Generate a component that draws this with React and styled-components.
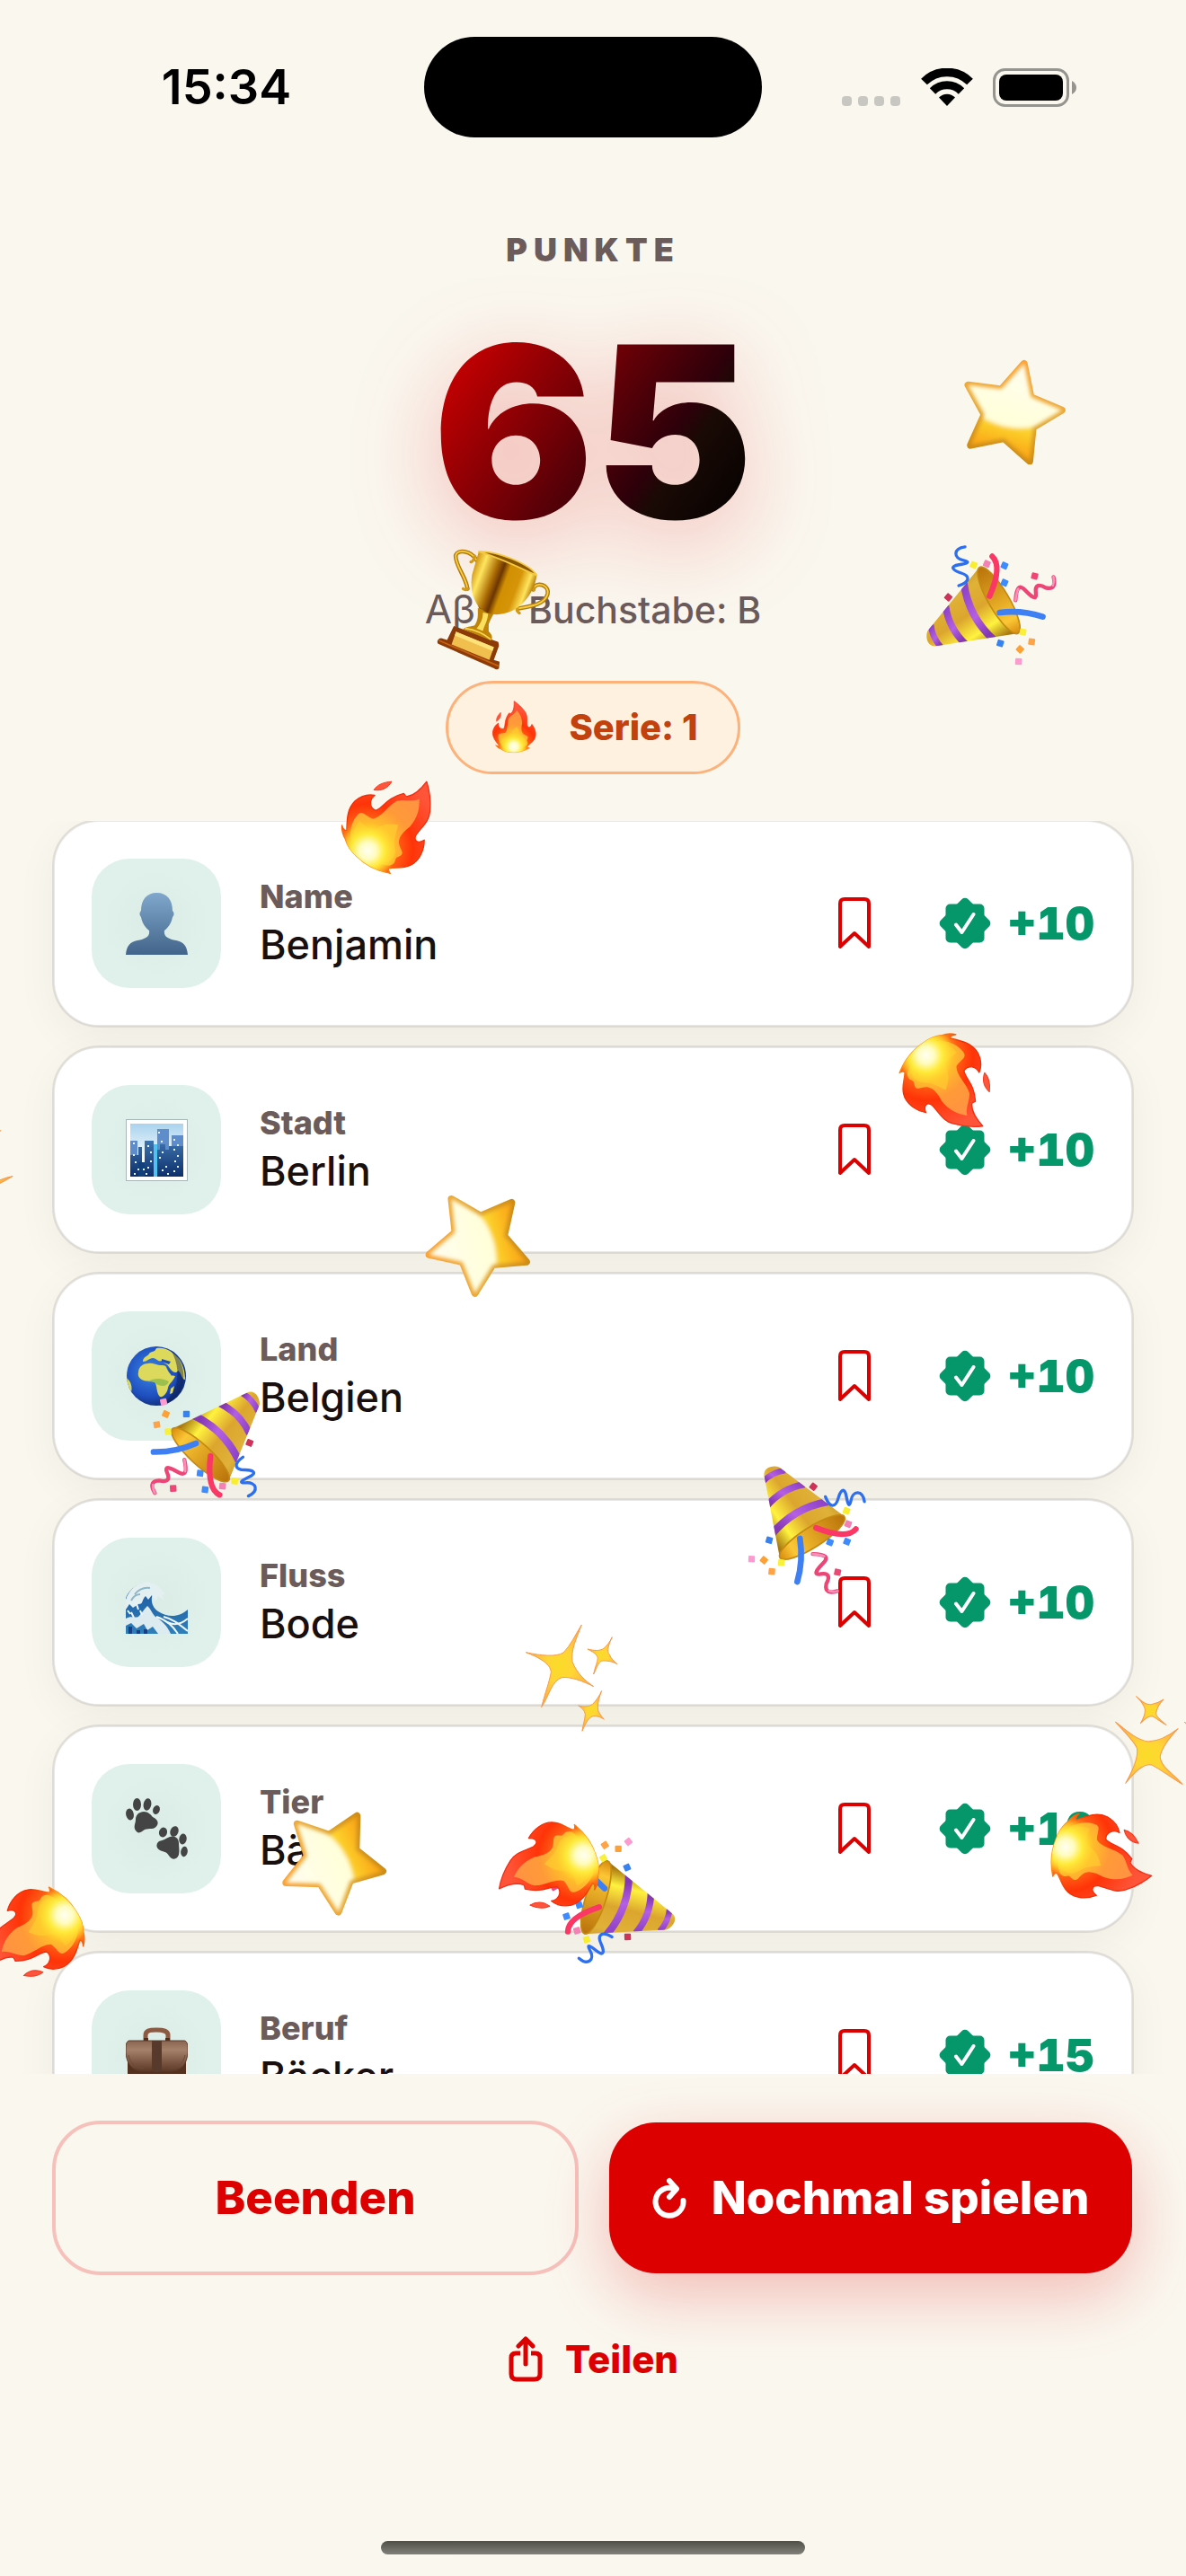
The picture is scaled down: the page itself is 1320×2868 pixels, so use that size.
import React from 'react'
import styled, { createGlobalStyle } from 'styled-components'

const results = [
  { label: 'Name', value: 'Benjamin', points: 10, icon: 'person' },
  { label: 'Stadt', value: 'Berlin', points: 10, icon: 'city' },
  { label: 'Land', value: 'Belgien', points: 10, icon: 'globe' },
  { label: 'Fluss', value: 'Bode', points: 10, icon: 'wave' },
  { label: 'Tier', value: 'Bär', points: 10, icon: 'paws' },
  { label: 'Beruf', value: 'Bäcker', points: 15, icon: 'briefcase' },
]

// x and y are the centre of each falling piece
const confetti = [
  { kind: 'star', x: 1125, y: 460, turn: 15 },
  { kind: 'popper', x: 1104, y: 673, turn: 0 },
  { kind: 'trophy', x: 550, y: 678, turn: 0 },
  { kind: 'flame', x: 437, y: 915, turn: 40 },
  { kind: 'flame', x: 1057, y: 1208, turn: 141 },
  { kind: 'sparkles', x: -34, y: 1326, turn: -135 },
  { kind: 'star', x: 533, y: 1383, turn: -104 },
  { kind: 'popper', x: 229, y: 1613, turn: 163 },
  { kind: 'popper', x: 899, y: 1704, turn: 88 },
  { kind: 'sparkles', x: 625, y: 1855, turn: 0 },
  { kind: 'sparkles', x: 1279, y: 1952, turn: -73 },
  { kind: 'star', x: 370, y: 2072, turn: -115 },
  { kind: 'popper', x: 672, y: 2115, turn: 228 },
  { kind: 'flame', x: 610, y: 2081, turn: -112 },
  { kind: 'flame', x: 1226, y: 2070, turn: 108 },
  { kind: 'flame', x: 37, y: 2156, turn: -125 },
]

const App = () => {
  return (
    <Screen>
      <GlobalStyle />
      <SharedGradients />
      <StatusBar>
        <Clock>15:34</Clock>
        <Island />
        <StatusIcons>
          <SignalDots />
          <Wifi />
          <Battery />
        </StatusIcons>
      </StatusBar>

      <Header>
        <ScoreLabel>PUNKTE</ScoreLabel>
        <Score>65</Score>
        <Letter>
          <LetterIcon>Aβγ</LetterIcon>
          <span>Buchstabe: B</span>
        </Letter>
        <Streak>
          <Flame width="50" height="64" />
          <span>Serie: 1</span>
        </Streak>
      </Header>

      <List>
        {results.map((result) => {
          const Icon = tileIcons[result.icon]
          return (
            <Card key={result.label}>
              <Tile><Icon /></Tile>
              <Texts>
                <Category>{result.label}</Category>
                <Answer>{result.value}</Answer>
              </Texts>
              <SaveButton aria-label={`${result.label} merken`}><Bookmark /></SaveButton>
              <Points>
                <Seal />
                <span>+{result.points}</span>
              </Points>
            </Card>
          )
        })}
      </List>

      <Footer>
        <Actions>
          <Secondary>Beenden</Secondary>
          <Primary>
            <Replay />
            <span>Nochmal spielen</span>
          </Primary>
        </Actions>
        <ShareButton>
          <Share />
          <span>Teilen</span>
        </ShareButton>
        <HomeIndicator />
      </Footer>

      <Sky aria-hidden="true">
        {confetti.map((piece, i) => {
          const Piece = pieces[piece.kind]
          return (
            <Falling key={i} $x={piece.x} $y={piece.y} $turn={piece.turn}>
              <Piece />
            </Falling>
          )
        })}
      </Sky>
    </Screen>
  )
}

export default App

const starPoints = '0,-57 17,-23 54,-18 28,9 34,46 0,29 -34,46 -28,9 -54,-18 -17,-23'

const flameOutline = 'M315 30C325 60 329 95 326 130C323 165 300 180 280 208C270 226 282 241 307 226C307 260 290 298 260 311C235 323 210 316 187 321C185 328 189 334 193 338C150 330 110 310 80 280C60 262 48 245 42 222C35 210 30 195 31 177C34 187 40 195 47 193C48 150 50 120 75 95C95 78 120 72 141 76C124 88 120 118 145 127C170 118 180 85 238 70C245 78 245 81 250 80C280 75 300 50 315 30Z'

const SharedGradients = () => (
  <HiddenSvg width="0" height="0" aria-hidden="true">
    <defs>
      <radialGradient id="flameBody" gradientUnits="userSpaceOnUse" cx="118" cy="255" r="250">
        <stop offset="0" stopColor="#ffd62e" />
        <stop offset="0.26" stopColor="#ffb01e" />
        <stop offset="0.42" stopColor="#ff5a14" />
        <stop offset="0.6" stopColor="#ff3408" />
        <stop offset="1" stopColor="#ff5438" />
      </radialGradient>
      <linearGradient id="flameEdge" gradientUnits="userSpaceOnUse" x1="280" y1="40" x2="80" y2="300">
        <stop offset="0" stopColor="#f0301a" />
        <stop offset="0.7" stopColor="#ee3000" />
        <stop offset="1" stopColor="#ffae1e" />
      </linearGradient>
      <radialGradient id="flameTongue" gradientUnits="userSpaceOnUse" cx="118" cy="255" r="240">
        <stop offset="0" stopColor="#ffe832" />
        <stop offset="0.3" stopColor="#ffc428" />
        <stop offset="0.6" stopColor="#ff9a38" />
        <stop offset="1" stopColor="#ff9244" />
      </radialGradient>
      <radialGradient id="flameGlow" gradientUnits="userSpaceOnUse" cx="118" cy="262" r="95">
        <stop offset="0" stopColor="#fffff2" />
        <stop offset="0.3" stopColor="#fffcc0" />
        <stop offset="0.6" stopColor="#ffee3c" stopOpacity="0.9" />
        <stop offset="1" stopColor="#ffd92e" stopOpacity="0" />
      </radialGradient>
      <linearGradient id="starEdge" x1="0" y1="0" x2="0" y2="1">
        <stop offset="0" stopColor="#fba030" />
        <stop offset="0.5" stopColor="#e6a836" />
        <stop offset="1" stopColor="#cc8c18" />
      </linearGradient>
      <linearGradient id="starBody" x1="0" y1="0" x2="0" y2="1">
        <stop offset="0.35" stopColor="#fff08a" />
        <stop offset="0.68" stopColor="#fcd62e" />
        <stop offset="1" stopColor="#fba013" />
      </linearGradient>
      <linearGradient id="starGloss" x1="0" y1="0" x2="0" y2="1">
        <stop offset="0" stopColor="#fffdf0" />
        <stop offset="0.7" stopColor="#ffffd8" />
        <stop offset="1" stopColor="#fff08e" />
      </linearGradient>
      <radialGradient id="spark">
        <stop offset="0" stopColor="#fadb28" />
        <stop offset="0.4" stopColor="#ffd634" />
        <stop offset="1" stopColor="#ffab48" />
      </radialGradient>
      <linearGradient id="cone" x1="0" y1="0.1" x2="0.7" y2="1">
        <stop offset="0.1" stopColor="#b98a1c" />
        <stop offset="0.35" stopColor="#e0b138" />
        <stop offset="0.6" stopColor="#dca62e" />
        <stop offset="0.82" stopColor="#fff23e" />
        <stop offset="1" stopColor="#a8780f" />
      </linearGradient>
      <linearGradient id="coneInside" x1="0" y1="0" x2="1" y2="0">
        <stop offset="0" stopColor="#b9720b" />
        <stop offset="0.4" stopColor="#d99a1d" />
        <stop offset="0.8" stopColor="#fbc736" />
        <stop offset="1" stopColor="#d98a0e" />
      </linearGradient>
      <linearGradient id="stripe" x1="0" y1="0" x2="0.6" y2="1">
        <stop offset="0" stopColor="#8a3fc4" />
        <stop offset="0.6" stopColor="#b45fe4" />
        <stop offset="1" stopColor="#8438b4" />
      </linearGradient>
      <linearGradient id="cup" gradientUnits="userSpaceOnUse" x1="400" y1="830" x2="590" y2="900">
        <stop offset="0" stopColor="#c98a0a" />
        <stop offset="0.16" stopColor="#ffe55e" />
        <stop offset="0.36" stopColor="#a96a02" />
        <stop offset="0.46" stopColor="#6a3500" />
        <stop offset="0.56" stopColor="#d18f02" />
        <stop offset="0.75" stopColor="#d69408" />
        <stop offset="0.9" stopColor="#ffe45c" />
        <stop offset="1" stopColor="#b57a08" />
      </linearGradient>
      <linearGradient id="bust" x1="0" y1="0" x2="0" y2="1">
        <stop offset="0" stopColor="#80a8cc" />
        <stop offset="1" stopColor="#43648a" />
      </linearGradient>
      <linearGradient id="dusk" x1="0" y1="0" x2="0" y2="1">
        <stop offset="0" stopColor="#a9d3ee" />
        <stop offset="0.6" stopColor="#f2f8fb" />
      </linearGradient>
      <linearGradient id="tower" x1="0" y1="0" x2="0" y2="1">
        <stop offset="0" stopColor="#3f73ae" />
        <stop offset="1" stopColor="#0c2f6a" />
      </linearGradient>
      <radialGradient id="sea" cx="0.4" cy="0.42" r="0.6">
        <stop offset="0" stopColor="#3b86e4" />
        <stop offset="0.7" stopColor="#1f4fc0" />
        <stop offset="1" stopColor="#12307e" />
      </radialGradient>
      <linearGradient id="swell" x1="0" y1="0" x2="0" y2="1">
        <stop offset="0" stopColor="#1c56a2" />
        <stop offset="1" stopColor="#2f7fb8" />
      </linearGradient>
      <linearGradient id="leather" x1="0" y1="0" x2="0" y2="1">
        <stop offset="0" stopColor="#8a6550" />
        <stop offset="0.3" stopColor="#a5806a" />
        <stop offset="1" stopColor="#5c3826" />
      </linearGradient>
      <filter id="soften" x="-20%" y="-20%" width="140%" height="140%">
        <feGaussianBlur stdDeviation="2" />
      </filter>
      <clipPath id="flameClip">
        <path d={flameOutline} />
      </clipPath>
      <clipPath id="coneClip">
        <path d="M388 815L215 1028C206 1048 214 1084 244 1079L516 1037Z" />
      </clipPath>
      <clipPath id="glossClip">
        <circle cx="-6" cy="-60" r="76" />
      </clipPath>
      <clipPath id="globeClip">
        <circle cx="34" cy="34" r="33" />
      </clipPath>
    </defs>
  </HiddenSvg>
)

/* falling pieces */

const Flame = (props) => (
  <svg width="100" height="128" viewBox="-70 -90 140 180" {...props}>
    <g transform="scale(0.467) rotate(-40) translate(-201 -165)" strokeLinejoin="round">
      <path d={flameOutline} fill="url(#flameBody)" stroke="url(#flameEdge)" strokeWidth="4" />
      <path d="M290 88C292 120 285 150 260 180C235 200 222 215 222 235C225 262 250 272 214 285C205 295 215 305 190 312C130 305 78 272 60 222C58 190 65 160 85 140C100 125 110 145 135 155C165 150 185 110 215 95C240 88 265 100 290 88Z" fill="url(#flameTongue)" />
      <path d="M220 175C215 200 203 220 209 250C214 278 200 290 185 300C130 300 85 270 68 232C66 210 72 180 90 163C110 176 120 200 150 185C175 170 195 172 220 175Z" fill="#ffd030" opacity="0.6" />
      <g clipPath="url(#flameClip)">
        <circle cx="118" cy="262" r="95" fill="url(#flameGlow)" />
      </g>
      <path d="M198 30C170 32 150 40 138 58C165 62 185 52 198 30Z" fill="#ff553c" stroke="#f23a20" strokeWidth="3" />
    </g>
  </svg>
)

const Star = () => (
  <svg width="132" height="132" viewBox="-66 -66 132 132">
    <polygon points={starPoints} fill="url(#starEdge)" stroke="url(#starEdge)" strokeWidth="8" strokeLinejoin="round" />
    <g filter="url(#soften)">
      <polygon points={starPoints} fill="url(#starBody)" />
      <g clipPath="url(#glossClip)">
        <polygon points={starPoints} fill="url(#starGloss)" />
      </g>
    </g>
  </svg>
)

const Sparkles = () => (
  <svg width="180" height="180" viewBox="-90 -90 180 180">
    <g transform="scale(0.333) translate(-129 -165)" fill="url(#spark)" stroke="#f59a4a" strokeWidth="3" strokeLinejoin="round">
      <path d="M196 27C178 75 160 110 165 150C180 190 210 215 236 233C200 215 160 200 130 203C95 215 90 260 62 302C75 250 88 220 94 185C92 155 50 135 10 119C60 130 110 135 135 120C160 95 175 60 196 27Z" />
      <path d="M298 68C285 95 280 115 288 125C295 140 305 150 315 158C300 150 280 145 262 148C250 155 245 175 236 192C240 170 250 150 250 138C248 125 230 115 216 108C240 114 258 114 270 106C280 98 290 85 298 68Z" />
      <path d="M263 248C252 275 248 300 252 315C258 328 265 335 271 343C260 335 245 330 232 333C215 340 208 362 198 382C202 355 208 340 208 325C206 312 195 303 185 297C205 302 222 300 232 293C245 280 255 265 263 248Z" />
    </g>
  </svg>
)

const papers = [
  [369, 808, '#f9ee2e', 24],
  [413, 804, '#f381b4', 24],
  [472, 810, '#3d8bff', 24],
  [472, 867, '#3d8bff', 24],
  [573, 845, '#ee4675', 14],
  [284, 916, '#cf3358', 40],
  [534, 1032, '#f9f03c', 10],
  [563, 1065, '#ffa346', 8],
  [524, 1090, '#ffa035', 42],
  [519, 1131, '#fb9bd0', 4],
  [458, 1070, '#3882f0', 18],
]

const Popper = () => (
  <svg width="153" height="140" viewBox="200 730 460 420">
    <path d="M388 815L215 1028C206 1048 214 1084 244 1079L516 1037Z" fill="url(#cone)" />
    <g clipPath="url(#coneClip)" fill="none" stroke="url(#stripe)">
      <path d="M336 868Q352 985 440 1062" strokeWidth="25" />
      <path d="M275 945Q286 1022 344 1075" strokeWidth="23" />
      <path d="M226 1008Q230 1052 262 1086" strokeWidth="20" />
    </g>
    <ellipse cx="453" cy="926" rx="128" ry="34" transform="rotate(59.6 453 926)" fill="url(#coneInside)" stroke="#c48a12" strokeWidth="5" />
    <g fill="none" strokeLinecap="round">
      <path d="M431 779Q466 812 422 912" stroke="#fb3766" strokeWidth="19" />
      <path d="M456 967Q530 958 600 981" stroke="#3f7ff4" strokeWidth="20" />
      <path d="M340 747C300 752 300 785 335 792C364 799 340 804 320 807C286 812 300 826 325 834C358 844 358 864 319 877" stroke="#2c6ff0" strokeWidth="10" />
      <path d="M509 926C512 882 522 872 541 892C560 912 580 930 577 902C573 872 590 872 610 884C640 892 642 870 636 848" stroke="#ee4577" strokeWidth="13" />
      <path d="M509 926C512 905 514 895 518 888M636 848Q640 862 634 876" stroke="#f990b8" strokeWidth="8" />
    </g>
    {papers.map(([x, y, color, turn]) => (
      <rect key={`${x}-${y}`} x={x - 11} y={y - 11} width="22" height="22" rx="3" fill={color} transform={`rotate(${turn} ${x} ${y})`} />
    ))}
  </svg>
)

const Trophy = () => (
  <svg width="132" height="139" viewBox="290 750 370 390">
    <g fill="none" strokeLinecap="round">
      <path d="M420 792C402 762 362 758 355 777C352 808 386 842 392 882" stroke="#b67a08" strokeWidth="13" />
      <path d="M420 792C402 762 362 758 355 777C352 808 386 842 392 882" stroke="#f5cf45" strokeWidth="5" />
      <path d="M415 780Q408 800 402 798M392 882Q386 888 378 882" stroke="#d39a14" strokeWidth="9" />
      <path d="M596 884C606 856 648 870 642 898C634 930 592 936 548 944" stroke="#b67a08" strokeWidth="13" />
      <path d="M596 884C606 856 648 870 642 898C634 930 592 936 548 944" stroke="#f5cf45" strokeWidth="5" />
      <path d="M598 870Q594 882 600 886M548 944Q542 950 554 958" stroke="#d39a14" strokeWidth="9" />
    </g>
    <path d="M349 998L488 1048L490 1060L474 1104L492 1110L490 1130C486 1136 480 1134 474 1130L300 1054C294 1046 300 1036 310 1036L328 1042Z" fill="#8c3a08" />
    <path d="M304 1044L486 1122" stroke="#c4600f" strokeWidth="5" strokeLinecap="round" />
    <path d="M356 1016L474 1064L460 1104L342 1056Z" fill="#f0bf4e" />
    <path d="M356 1016L474 1064L470 1076L352 1028Z" fill="#fce27a" />
    <path d="M378 1008C386 1000 404 1000 414 996C426 980 424 962 424 942L474 958C464 978 452 996 456 1014C466 1022 472 1032 466 1044Z" fill="#c08408" />
    <path d="M440 956C440 976 432 992 420 1006L440 1014C444 996 456 980 456 960Z" fill="#fbe060" />
    <path d="M384 1006Q430 1012 464 1040" stroke="#f8d650" strokeWidth="5" fill="none" />
    <path d="M427 766C480 762 586 804 608 840C600 900 548 968 472 962C420 954 396 900 406 838Z" fill="url(#cup)" />
    <path d="M427 766C480 762 586 804 608 840C566 822 490 784 427 766Z" fill="#8a5604" stroke="#f3c842" strokeWidth="5" strokeLinejoin="round" />
  </svg>
)

const pieces = { flame: Flame, star: Star, sparkles: Sparkles, popper: Popper, trophy: Trophy }

/* category icons */

const Person = () => (
  <svg width="69" height="69" viewBox="0 0 69 69">
    <path d="M0 69C1 58 5 55 13 53C22 51 27 49 26 42C20 37 18 32 17 27C15 25 15 22 17 20C17 8 23 0 34.500 0C46 0 52 8 52 20C54 22 54 25 52 27C51 32 49 37 43 42C42 49 47 51 56 53C64 55 68 58 69 69Z" fill="url(#bust)" />
  </svg>
)

const cityWindows = [[8, 26], [8, 39], [10, 47], [13, 55], [9, 60], [24, 29], [27, 36], [24, 53], [27, 46], [19, 55], [22, 60], [36, 14], [39, 24], [37, 42], [40, 36], [44, 52], [40, 56], [46, 60], [53, 22], [57, 28], [53, 33], [57, 40], [54, 46], [57, 52], [53, 57]]

const City = () => (
  <svg width="69" height="69" viewBox="0 0 69 69">
    <rect x="0.500" y="0.500" width="68" height="68" fill="#fff" stroke="#a9b7b6" />
    <rect x="5" y="5" width="59" height="59" fill="url(#dusk)" />
    <path d="M5 24H13V64H5ZM35 11H48V64H35ZM51 18H64V64H51Z" fill="#5f8dcb" />
    <path d="M5 40H14V31H18V50H21V24H31V64H5ZM34 34H38V28H44V34H49V64H34ZM48 30H64V64H48Z" fill="url(#tower)" />
    <path d="M31 28H35V64H31Z" fill="#4ec3ef" />
    <path d="M14 48H21V64H14Z" fill="#12407c" />
    {cityWindows.map(([x, y]) => <rect key={`${x}-${y}`} x={x} y={y} width="2" height="2" fill="#e4f3ff" />)}
  </svg>
)

const Globe = () => (
  <svg width="69" height="69" viewBox="0 0 69 69">
    <circle cx="34" cy="34" r="33" fill="url(#sea)" />
    <g clipPath="url(#globeClip)" fill="#dcd95c">
      <path d="M14 30C14 24 19 20 25 20C30 19 34 22 38 22C42 22 44 22 45 24C47 29 50 34 55 34C53 40 48 42 47 47C46 53 42 58 38 57C34 53 35 47 33 42C31 39 26 41 20 39C15 37 13 34 14 30Z" />
      <path d="M19 17C20 12 25 12 26 9C29 6 32 8 34 3C44 1 54 8 60 16C64 22 66 30 66 38C62 38 62 30 58 28C56 32 52 30 48 24C46 20 42 20 40 17C36 19 34 14 30 14C26 14 24 18 19 18Z" />
      <path d="M0 36C4 38 8 44 6 52L2 56ZM50 48L54 45L52 53L49 54Z" />
      <path d="M24 40C32 36 40 36 48 40C46 46 40 46 34 43C32 39 28 41 24 40Z" fill="#9cc04e" />
    </g>
    <path d="M40 15L50 18L48 21L40 18ZM46 24L53 32L51 34Z" fill="#1f4fb4" />
    <path d="M50 5C62 14 68 30 62 48C58 58 48 66 36 67C58 58 64 28 50 5Z" fill="#0a1c50" opacity="0.45" />
  </svg>
)

const Wave = () => (
  <svg width="69" height="69" viewBox="0 0 69 69">
    <path d="M0 29C5 18 14 12 26 12C31 13 34 16 33 20C27 26 27 38 36 44C48 52 60 50 69 42V69H0Z" fill="url(#swell)" />
    <path d="M0 31C2 24 8 16 16 13C24 10 34 12 38 18L44 24L40 26L43 32L36 27L33 33L29 26L25 31L22 27C17 32 20 36 14 36L8 40L4 36L0 42Z" fill="#e3eff0" />
    <path d="M0 52C6 48 10 52 14 50C18 46 20 42 24 38C27 40 29 46 33 50C40 54 46 60 50 69H36L30 61L24 65L20 58L12 63L6 57L0 60Z" fill="#dcebf0" />
    <g fill="none" stroke="#eef7fb" strokeWidth="2">
      <path d="M34 50C46 54 52 60 58 69" />
      <path d="M42 50C54 53 60 59 69 66" />
      <path d="M46 56C54 60 62 58 69 52" />
      <path d="M6 45L9 51M16 43L18 48M12 36L14 42M2 43L5 47" />
    </g>
    <path d="M10 25C14 20 20 17 27 18M6 32C8 28 12 25 16 25" fill="none" stroke="#8db6c8" strokeWidth="2" />
    <path d="M5 61V69M14 65V69M22 64V69" stroke="#173f86" strokeWidth="4" />
  </svg>
)

const Paws = () => (
  <svg width="69" height="69" viewBox="0 0 69 69">
    <g fill="#444">
      <ellipse cx="4.500" cy="18" rx="4.300" ry="6.500" transform="rotate(-12 4.500 18)" />
      <ellipse cx="12.500" cy="7" rx="4.500" ry="7" />
      <ellipse cx="24" cy="7" rx="4.300" ry="6.800" transform="rotate(10 24 7)" />
      <ellipse cx="34" cy="13" rx="3.800" ry="5" transform="rotate(20 34 13)" />
      <path d="M16 16C22 13 27 17 30 21C34 23 37 26 35 30C32 36 26 33 21 35C18 37 14 41 11 36C8 32 11 28 11 24C11 20 13 17 16 16Z" />
      <ellipse cx="41.500" cy="38" rx="4.500" ry="5.500" transform="rotate(15 41.500 38)" />
      <ellipse cx="54" cy="37" rx="4.500" ry="6" transform="rotate(20 54 37)" />
      <ellipse cx="63.500" cy="45.500" rx="4.200" ry="6" transform="rotate(8 63.500 45.500)" />
      <ellipse cx="65" cy="59.500" rx="3.800" ry="5.700" transform="rotate(8 65 59.500)" />
      <path d="M49 43C54 41 59 44 59 50C59 55 60 58 59 63C57 69 51 69 48 64C46 60 43 60 38 58C34 56 33 51 37 48C42 47 44 45 49 43Z" />
    </g>
  </svg>
)

const Briefcase = () => (
  <svg width="69" height="69" viewBox="0 0 69 69">
    <path d="M22 18V12C22 7 26 6 34 6C42 6 47 7 47 12V18" fill="none" stroke="#8b5a43" strokeWidth="5" />
    <path d="M20 17H25M44 17H49" stroke="#4d2d1e" strokeWidth="4" />
    <path d="M2 34H67V66H2Z" fill="#54301f" />
    <path d="M4 18H65C68 18 69 22 69 28C69 46 60 52 50 52H19C9 52 0 46 0 28C0 22 1 18 4 18Z" fill="url(#leather)" stroke="#5a3a2a" />
    <path d="M3 34C5 44 12 49 20 49M66 34C64 44 57 49 49 49" fill="none" stroke="#6e4a38" />
    <path d="M29 18H40V50C40 54 29 54 29 50Z" fill="#573a2b" />
    <rect x="27" y="62" width="15" height="4" fill="#e9e4df" />
  </svg>
)

const tileIcons = { person: Person, city: City, globe: Globe, wave: Wave, paws: Paws, briefcase: Briefcase }

/* interface icons */

const SignalDots = () => (
  <svg width="66" height="43" viewBox="0 0 66 43" fill="#c9c7c1">
    {[0, 18, 36, 54].map((x) => <rect key={x} x={x} y="31" width="11" height="11" rx="4" />)}
  </svg>
)

const Wifi = () => (
  <svg width="58" height="43" viewBox="0 0 58 43">
    <g fill="none" stroke="#000">
      <path d="M3.500 15A36 36 0 0 1 54.500 15" strokeWidth="9.500" />
      <path d="M13 25.500A22.500 22.500 0 0 1 45 25.500" strokeWidth="9" />
    </g>
    <path d="M20 32.500A12.500 12.500 0 0 1 38 32.500L29 42Z" />
  </svg>
)

const Battery = () => (
  <svg width="94" height="43" viewBox="0 0 94 43">
    <rect x="1.500" y="1.500" width="82" height="40" rx="12" fill="none" stroke="#96948f" strokeWidth="3" />
    <rect x="7" y="7" width="71" height="29" rx="8" />
    <path d="M88 14Q93 17 93 21.500T88 29Z" fill="#96948f" />
  </svg>
)

const Bookmark = () => (
  <svg width="36" height="58" viewBox="0 0 36 58" fill="none" stroke="#dd0000" strokeWidth="4" strokeLinejoin="round">
    <path d="M2 55V7Q2 2 7 2H29Q34 2 34 7V55L18 40Z" />
  </svg>
)

const Seal = () => (
  <svg width="58" height="58" viewBox="-29 -29 58 58">
    <g fill="#059669">
      <rect x="-21.500" y="-21.500" width="43" height="43" rx="5" />
      <rect x="-21.500" y="-21.500" width="43" height="43" rx="5" transform="rotate(45)" />
    </g>
    <path d="M-10 1.500L-3.500 10L9.500-10" fill="none" stroke="#fff" strokeWidth="4" strokeLinecap="round" strokeLinejoin="round" />
  </svg>
)

const Replay = () => (
  <svg width="38" height="46" viewBox="-19 -26 38 46" fill="none" stroke="#fff" strokeWidth="6" strokeLinecap="round" strokeLinejoin="round">
    <path d="M15.500 0A15.500 15.500 0 1 1 6-13" />
    <path d="M0-22L8-13L0-4" />
  </svg>
)

const Share = () => (
  <svg width="40" height="52" viewBox="0 0 40 52" fill="none" stroke="#dd0000" strokeWidth="5" strokeLinejoin="round">
    <path d="M14 19H9Q4 19 4 24V42Q4 48 10 48H30Q36 48 36 42V24Q36 19 31 19H26" />
    <path d="M20 31V5M12 11L20 3L28 11" strokeLinecap="round" />
  </svg>
)

const GlobalStyle = createGlobalStyle`
  * {
    box-sizing: border-box;
  }

  body {
    margin: 0;
    background: #faf7ef;
  }

  button {
    padding: 0;
    border: 0;
    background: none;
    font-family: inherit;
    cursor: pointer;
  }

  svg {
    display: block;
    flex-shrink: 0;
  }
`

const HiddenSvg = styled.svg`
  position: absolute;
`

const Screen = styled.div`
  position: relative;
  display: flex;
  flex-direction: column;
  height: 100vh;
  overflow: hidden;
  background: #faf7ef;
  color: #1a0f0f;
  font-family: Inter, 'Liberation Sans', sans-serif;
`

const StatusBar = styled.div`
  display: grid;
  grid-template-columns: 1fr 376px 1fr;
  align-items: center;
  height: 176px;
  padding: 18px 0 0;
  color: #000;
`

const Clock = styled.div`
  padding-left: 32px;
  font-size: 54px;
  line-height: 60px;
  font-weight: 600;
  text-align: center;
`

const Island = styled.div`
  height: 112px;
  border-radius: 56px;
  background: #000;
`

const StatusIcons = styled.div`
  display: flex;
  justify-content: flex-end;
  align-items: center;
  gap: 22px;
  padding-right: 121px;
`

const Header = styled.header`
  display: flex;
  flex-direction: column;
  align-items: center;
  padding: 80px 60px 52px;
`

const ScoreLabel = styled.div`
  color: #6b5b5b;
  font-size: 36px;
  line-height: 44px;
  font-weight: 900;
  letter-spacing: 7px;
`

const Score = styled.div`
  margin: 48px 0 40px;
  padding: 0 8px;
  font-size: 266px;
  line-height: 264px;
  font-weight: 900;
  background: linear-gradient(125deg, #dd0000 4%, #2e000a 66%, #1a0a05 72%, #000 96%);
  background-clip: text;
  -webkit-background-clip: text;
  color: transparent;
  filter: drop-shadow(0 24px 48px rgba(221, 0, 0, 0.26));
`

const Letter = styled.div`
  display: flex;
  align-items: baseline;
  gap: 34px;
  height: 52px;
  color: #6b5b5b;
  font-size: 41px;
  line-height: 52px;
  font-weight: 500;
`

const LetterIcon = styled.span`
  font-size: 44px;
  font-weight: 400;
`

const Streak = styled.div`
  display: flex;
  align-items: center;
  gap: 36px;
  height: 104px;
  margin-top: 54px;
  padding: 0 44px 0 48px;
  border: 3px solid #fdb27c;
  border-radius: 52px;
  background: #fff1df;
  color: #c2410c;
  font-size: 40px;
  line-height: 48px;
  font-weight: 800;
`

const List = styled.main`
  flex: 1;
  display: flex;
  flex-direction: column;
  gap: 24px;
  min-height: 0;
  padding: 0 60px;
  overflow: hidden;
`

const Card = styled.article`
  display: flex;
  align-items: center;
  flex-shrink: 0;
  padding: 42px;
  border-radius: 50px;
  background: #fff;
  outline: 3px solid rgba(0, 0, 0, 0.09);
  outline-offset: -1px;
  box-shadow: 0 12px 48px rgba(0, 0, 0, 0.05);
`

const Tile = styled.div`
  display: flex;
  align-items: center;
  justify-content: center;
  width: 144px;
  height: 144px;
  margin-right: 43px;
  border-radius: 42px;
  background: radial-gradient(#daece5, #dff1ea 60%);
`

const Texts = styled.div`
  flex: 1;
`

const Category = styled.div`
  color: #6b5b5b;
  font-size: 36px;
  line-height: 48px;
  font-weight: 800;
`

const Answer = styled.div`
  font-size: 45px;
  line-height: 60px;
  font-weight: 500;
`

const SaveButton = styled.button`
  margin-right: 76px;
`

const Points = styled.div`
  display: flex;
  align-items: center;
  gap: 18px;
  color: #059669;
  font-size: 50px;
  line-height: 56px;
  font-weight: 900;
  font-variant-numeric: tabular-nums;
`

const Footer = styled.footer`
  display: flex;
  flex-direction: column;
  align-items: center;
  padding: 54px 60px 24px;
`

const Actions = styled.div`
  display: grid;
  grid-template-columns: 1fr 1fr;
  gap: 36px;
  width: 100%;
`

const ActionButton = styled.button`
  display: flex;
  align-items: center;
  justify-content: center;
  gap: 28px;
  height: 168px;
  border-radius: 52px;
  font-size: 51px;
  line-height: 60px;
  font-weight: 800;
`

const Secondary = styled(ActionButton)`
  color: #dd0000;
  outline: 4px solid #f6c1bb;
  outline-offset: -2px;
`

const Primary = styled(ActionButton)`
  background: #dd0000;
  color: #fff;
  box-shadow: 0 24px 72px rgba(221, 0, 0, 0.24);
`

const ShareButton = styled.button`
  display: flex;
  align-items: center;
  gap: 24px;
  margin-top: 66px;
  color: #dd0000;
  font-size: 42px;
  line-height: 60px;
  font-weight: 800;
`

const HomeIndicator = styled.div`
  width: 472px;
  height: 15px;
  margin-top: 172px;
  border-radius: 8px;
  background: linear-gradient(#4f5048, #82807a);
`

const Sky = styled.div`
  position: absolute;
  inset: 0;
  overflow: hidden;
  pointer-events: none;
`

const Falling = styled.div`
  position: absolute;
  left: ${(props) => props.$x}px;
  top: ${(props) => props.$y}px;
  transform: translate(-50%, -50%) rotate(${(props) => props.$turn}deg);
`
